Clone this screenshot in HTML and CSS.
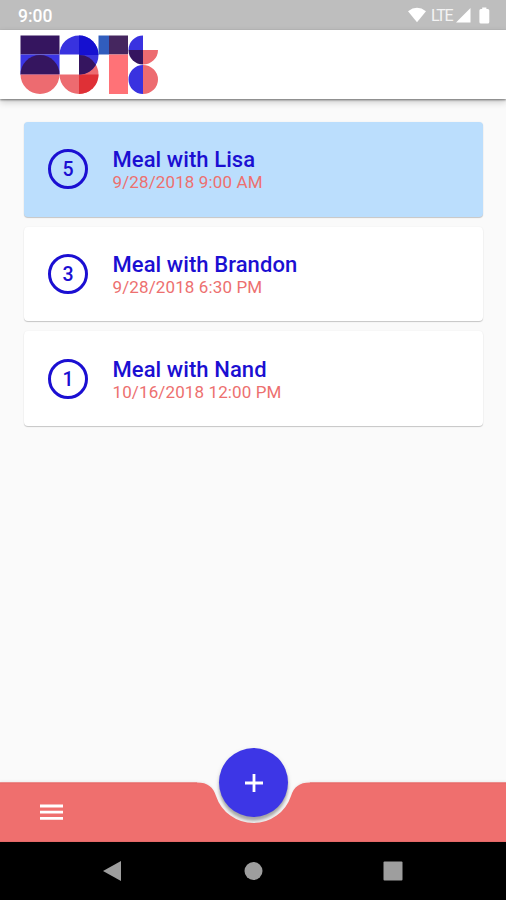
FILE: index.html
```html
<!DOCTYPE html>
<html lang="en">
<head>
<meta charset="utf-8">
<title>Meals</title>
<link rel="stylesheet" href="styles.css">
</head>
<body>
<div class="screen">
  <div class="status">
    <span class="clock">9:00</span>
    <div class="signals">
      <svg class="wifi" width="20" height="16" viewBox="0 0 20 16"><path d="M10 15.2 1 4.2Q10-2.6 19 4.2Z"/></svg>
      <span class="lte">LTE</span>
      <svg class="cell" width="15" height="16" viewBox="0 0 15 16"><path d="M14.5 1v14.500H0Z"/></svg>
      <svg class="battery" width="11" height="17" viewBox="0 0 11 17"><path d="M3.200.500h4.200v1.500h1.400q1.500 0 1.500 1.500v11.500q0 1.500-1.500 1.500H1.900Q.400 16.500.400 15V3.500q0-1.500 1.500-1.500h1.300Z"/></svg>
    </div>
  </div>
  <header class="header">
    <svg class="logo" width="139" height="60" viewBox="0 0 139 60" role="img" aria-label="Logo">
      <path fill="#35155f" d="M.500.500h39v19H.500Z"/>
      <path fill="#3b35e4" d="M.500 19.500h39V39.500H.500Z"/>
      <path fill="#35155f" d="M.500 39.500a19.500 19.500 0 0 1 39 0Z"/>
      <path fill="#ed6b70" d="M.500 39.500a19.500 19.500 0 0 0 39 0ZM39.500 39.500a19.500 19.500 0 0 0 19.500 19.500V39.500Z"/>
      <path fill="#3832df" d="M39.500 19.500A19.500 19 0 0 1 59 .500v19Z"/>
      <path fill="#ed6b70" d="M59 20a19.500 19.500 0 0 1 0 39Z"/>
      <path fill="#df3036" d="M59 39.500h19.500A19.500 19.500 0 0 1 59 59Z"/>
      <path fill="#3c35dc" d="M59 .500a19.500 19.500 0 0 1 0 39Z"/>
      <path fill="#1510d0" d="M59 .500a19.500 19.500 0 0 1 19.500 19.500H59Z"/>
      <path fill="#35155f" d="M59 20A19.500 19.500 0 0 1 75.900 29.750A19.500 19.500 0 0 1 59 39.500Z"/>
      <path fill="#315dbd" d="M78.500.500H89v19H78.500Z"/>
      <path fill="#45265f" d="M89 .500h19v19H89Z"/>
      <path fill="#ff7277" d="M89 19.500h19V59H89Z"/>
      <path fill="#3932e0" d="M108.500 15A14.500 14.500 0 0 1 123 .500V15ZM123 30a14.500 14.500 0 0 0 0 29Z"/>
      <path fill="#35155f" d="M108.500 15A14.500 14.500 0 0 0 123 29.500V15Z"/>
      <path fill="#ed6b70" d="M123 15h15a15 14.500 0 0 1-15 14.500ZM123 30a15 14.500 0 0 1 0 29Z"/>
    </svg>
  </header>
  <main class="list">
    <article class="card selected">
      <div class="count">5</div>
      <div><h2>Meal with Lisa</h2><p>9/28/2018 9:00 AM</p></div>
    </article>
    <article class="card">
      <div class="count">3</div>
      <div><h2>Meal with Brandon</h2><p>9/28/2018 6:30 PM</p></div>
    </article>
    <article class="card">
      <div class="count">1</div>
      <div><h2>Meal with Nand</h2><p>10/16/2018 12:00 PM</p></div>
    </article>
  </main>
  <footer class="bar">
    <svg class="bar-shape" width="506" height="60" viewBox="0 0 506 60">
      <path fill="#ef6f6e" d="M0 .500H197C208 .500 213 5 216 14A39.500 39.500 0 0 0 291 14C294 5 299 .500 310 .500H506V60H0Z"/>
      <path fill="none" stroke="#e46967" d="M0 1H197M310 1H506M0 59.500H506"/>
    </svg>
    <svg class="menu" width="23" height="18" viewBox="0 0 23 18"><path d="M0 3h23M0 9.200h23M0 15.400h23"/></svg>
    <div class="fab"><svg width="18" height="18" viewBox="0 0 18 18"><path d="M9 0v18M0 9h18"/></svg></div>
  </footer>
  <nav class="system">
    <svg width="20" height="22" viewBox="0 0 20 22"><path d="M19 1v20L1 11Z"/></svg>
    <svg width="20" height="20" viewBox="0 0 20 20"><circle cx="10.500" cy="10" r="9"/></svg>
    <svg width="20" height="20" viewBox="0 0 20 20"><rect x=".5" y=".5" width="19" height="19" rx="1"/></svg>
  </nav>
</div>
</body>
</html>
```
FILE: styles.css
```css
* { box-sizing: border-box; }
body { margin: 0; font-family: Roboto, sans-serif; }
svg { display: block; }
.screen { width: 506px; height: 900px; display: flex; flex-direction: column; background: #fafafa; overflow: hidden; }
.status { height: 30px; flex: none; background: #bebebe; color: #fff; display: flex; justify-content: space-between; padding: 0 16px 0 18px; }
.clock { font-size: 17.500px; font-weight: 500; line-height: 32px; }
.signals { display: flex; align-items: flex-start; fill: #fff; }
.wifi { margin-top: 7px; }
.lte { font-size: 16px; line-height: 32px; width: 21px; margin: 0 4px 0 4px; letter-spacing: -1.300px; color: #f4f4f4; }
.cell { margin: 7px 8px 0 0; }
.battery { margin-top: 6.500px; }
.header { height: 69px; flex: none; background: #fff; padding: 5px 0 0 20px; box-shadow: 0 1px 2px #0007, 0 3px 7px #0003; }
.list { flex: 1; padding: 23px 23px 0 24px; display: flex; flex-direction: column; gap: 10px; }
.card { height: 94.700px; display: flex; align-items: center; gap: 24.500px; padding-left: 24px; background: #fff; border-radius: 4px; box-shadow: 0 1px 1px #0003, 0 0 2px #0000000f; }
.selected { background: #bbdefd; }
.count { width: 40px; height: 40px; border: 3px solid #1b0fd2; border-radius: 50%; color: #1b0fd2; font-size: 19.500px; font-weight: 500; line-height: 35px; text-align: center; }
.card h2 { margin: 2px 0 0; color: #1b0fd2; font-size: 22px; font-weight: 500; line-height: 24px; letter-spacing: .08px; }
.card p { margin: 0; color: #ed706f; font-size: 17px; line-height: 20px; letter-spacing: .12px; }
.bar { position: relative; height: 60px; flex: none; padding: 21px 0 0 39.500px; }
.bar-shape { position: absolute; inset: 0; filter: drop-shadow(0 -1px 1px #0000000d); }
.menu { position: relative; fill: none; stroke: #fff; stroke-width: 2.800; }
.fab { position: absolute; left: 219px; top: -34px; width: 69px; height: 69px; border-radius: 50%; background: #3d36e6; display: flex; align-items: center; justify-content: center; box-shadow: 0 4px 3px #0004, 0 2px 5px #0002; }
.fab svg { fill: none; stroke: #fff; stroke-width: 2.800; }
.system { height: 58px; flex: none; background: #000; fill: #9e9e9e; display: flex; align-items: center; justify-content: space-between; padding: 0 103px 0 102px; }
```
